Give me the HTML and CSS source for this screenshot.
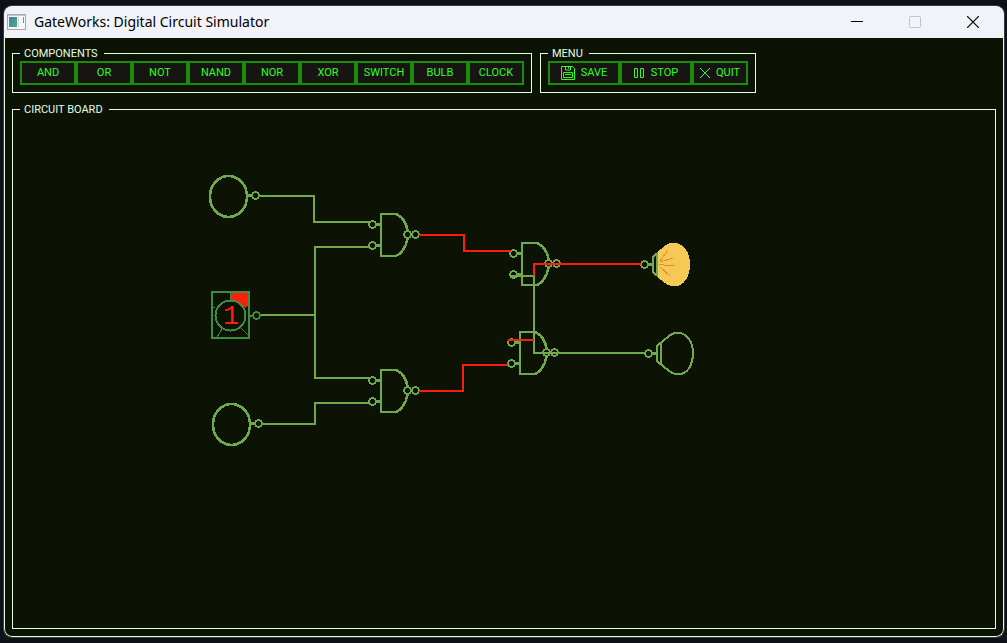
FILE: index.html
```html
<!DOCTYPE html>
<html lang="en">
<head>
<meta charset="utf-8">
<title>GateWorks: Digital Circuit Simulator</title>
<link rel="stylesheet" href="styles.css">
</head>
<body>
<div class="window">
  <header class="titlebar">
    <svg class="app-icon" width="19" height="16" viewBox="0 0 19 16" aria-hidden="true">
      <defs><linearGradient id="screen" x1="0" y1="0" x2="1" y2="1"><stop offset="0" stop-color="#4a78b0"/><stop offset="1" stop-color="#48b078"/></linearGradient></defs>
      <rect x=".5" y=".5" width="18" height="15" fill="#f6f7f8" stroke="#a4a8ac"/>
      <path d="M1 1.5h17" stroke="#c4c8cc"/>
      <rect x="2" y="3" width="8" height="10" fill="url(#screen)"/>
      <path d="M11.5 3v10" stroke="#d4d8dc"/>
      <path d="M16.5 3v6" stroke="#48a890" stroke-width="1"/>
    </svg>
    <h1 class="title">GateWorks: Digital Circuit Simulator</h1>
    <div class="controls">
      <button class="control" aria-label="Minimize"><svg width="12" height="12"><path d="M0 5.5h12" stroke="#000"/></svg></button>
      <button class="control" aria-label="Maximize" disabled><svg width="12" height="12"><rect x=".5" y=".5" width="11" height="11" rx="1" fill="none" stroke="#c2c3c8"/></svg></button>
      <button class="control" aria-label="Close"><svg width="12" height="12"><path d="M0 0l12 12M12 0L0 12" stroke="#000" stroke-width="1.2"/></svg></button>
    </div>
  </header>
  <main class="client">
    <div class="toolbar">
      <fieldset class="panel">
        <legend>COMPONENTS</legend>
        <div class="buttons">
          <button class="tool">AND</button>
          <button class="tool">OR</button>
          <button class="tool">NOT</button>
          <button class="tool">NAND</button>
          <button class="tool">NOR</button>
          <button class="tool">XOR</button>
          <button class="tool">SWITCH</button>
          <button class="tool">BULB</button>
          <button class="tool">CLOCK</button>
        </div>
      </fieldset>
      <fieldset class="panel">
        <legend>MENU</legend>
        <div class="buttons">
          <button class="tool tool-wide"><svg width="14" height="14" class="glyph" aria-hidden="true"><path d="M.5.5h11l2 2v11H.5zM4.500 1v3h5V1M7.500 1v1.500M2.500 11.500v-5h9v5zM4 8.500h6"/></svg>SAVE</button>
          <button class="tool tool-wide"><svg width="11" height="10" class="glyph" aria-hidden="true"><path d="M.5.5h3v9h-3zM6.500.5h3v9h-3z"/></svg>STOP</button>
          <button class="tool"><svg width="10" height="10" class="glyph" aria-hidden="true"><path d="M0 0l10 10M10 0L0 10"/></svg>QUIT</button>
        </div>
      </fieldset>
    </div>
    <fieldset class="panel board">
      <legend>CIRCUIT BOARD</legend>
      <svg class="canvas" aria-label="Circuit">
        <defs>
          <g id="pin"><circle r="3.500" stroke-width="1.700"/></g>
          <g id="nand">
            <path d="M14 0H0v42h14"/>
            <path d="M14 0C20 1 26 9 26.500 17M26.500 25C25 33 20 41 14 42" stroke-width="2.500"/>
            <path d="M-5 10.500h5M-5 31.500h5" stroke-width="3"/>
            <use href="#pin" x="-8.500" y="10.500"/><use href="#pin" x="-8.500" y="31.500"/>
            <use href="#pin" x="26.500" y="20.500"/><use href="#pin" x="34.500" y="20.500"/>
          </g>
          <g id="switch">
            <ellipse rx="18.500" ry="20.500" stroke-width="2.600"/>
            <path d="M19-1h5" stroke-width="3"/>
            <use href="#pin" x="27" y="-1"/>
          </g>
          <path id="glass" d="M12.500-11L22-18.500C25-21 28-21 32-20.500C41-18 44.500-9 44.500 0S41 18 33 20.500C29 21 26 21 22 18.500L12.500 11z"/>
          <g id="socket">
            <path d="M4 0h5" stroke-width="3"/>
            <path d="M8.500-8L12.500-11V11L8.500 8z"/>
            <use href="#pin"/>
          </g>
        </defs>
        <g class="circuit" transform="translate(-13 -115)">
          <g class="part">
            <use href="#switch" x="228.500" y="196.500"/>
            <use href="#switch" x="231.500" y="424.500"/>
            <use href="#nand" x="381" y="214"/>
            <use href="#nand" x="381" y="370"/>
            <use href="#nand" x="522" y="243"/>
            <use href="#nand" x="520" y="332"/>
            <use href="#glass" x="644.500" y="264.500" class="lit"/>
            <use href="#socket" x="644.500" y="264.500"/>
            <use href="#glass" x="648.500" y="353.500"/>
            <use href="#socket" x="648.500" y="353.500"/>
          </g>
          <path class="ray" d="M660 261l8-11M660 262l13-4M659 264.500l16 1.500M660 267l10 9"/>
          <g class="clock">
            <path class="sweep" d="M231 293h17v13l-3 2-4-5q-5-3-10-3z"/>
            <path d="M212 292h37v46h-37zM250 315.500h3"/>
            <circle cx="230.500" cy="315.500" r="15"/>
            <use href="#pin" x="256.500" y="315.500"/>
            <path d="M230.500 293v7M213 307l2 1M222 329l-5 8M240 327l8 8" stroke-width="1"/>
            <text x="231" y="324">1</text>
          </g>
          <g class="wire">
            <path d="M259 196h55v26h55M261 315h54M369 247h-54v131h54M262 424h53v-21h54M511 276h23v77h111"/>
          </g>
          <g class="wire live">
            <path d="M419 235h45v16h47M419 391h44v-26h45M508 340h26M534 276v-12h107"/>
          </g>
        </g>
      </svg>
    </fieldset>
  </main>
</div>
</body>
</html>
```
FILE: styles.css
```css
* { box-sizing: border-box; }

body {
  margin: 0;
  height: 100vh;
  padding: 6px 3px 6px 4px;
  background: #0e1117;
  font-family: Roboto, "Liberation Sans", sans-serif;
}

button { margin: 0; padding: 0; font: inherit; }

.window {
  height: 100%;
  display: flex;
  flex-direction: column;
  border-radius: 8px;
  overflow: hidden;
  box-shadow: 0 0 0 1px #3a3b40;
}

.titlebar {
  flex: none;
  height: 32px;
  display: flex;
  align-items: center;
  padding: 0 2px 0 3px;
  background: #f1f3f9;
}

.title {
  flex: 1;
  margin: 0 0 0 8px;
  font: 14px/20px "Noto Sans", "Open Sans", sans-serif;
  color: #000;
}

.controls { display: flex; align-self: stretch; }

.control {
  width: 58px;
  display: flex;
  align-items: center;
  justify-content: center;
  border: 0;
  background: transparent;
}

.client {
  flex: 1;
  min-height: 0;
  display: flex;
  flex-direction: column;
  gap: 11px;
  padding: 10px 7px 7px;
  background: #0c1305;
  border: 1px solid #e2ffe0;
  border-top: 0;
  border-radius: 0 0 8px 8px;
}

.toolbar { display: flex; gap: 8px; }

.panel {
  min-width: 0;
  margin: 0;
  padding: 2px 7px 7px;
  border: 1px solid #e2ffe0;
}

.panel legend {
  padding: 0 6px 0 4px;
  font-size: 11px;
  line-height: 11px;
  color: #e2ffe0;
}

.buttons { display: flex; }

.tool {
  width: 56px;
  height: 24px;
  display: flex;
  align-items: center;
  justify-content: center;
  gap: 6px;
  border: 2px solid #1c8c08;
  background: #171514;
  font-size: 11px;
  line-height: 14px;
  color: #2dff22;
}

.tool-wide { width: 72px; }

.glyph { fill: none; stroke: #2dff22; }

.board {
  flex: 1;
  min-height: 0;
  padding: 0;
}

.board legend { margin-left: 7px; }

.canvas { display: block; width: 100%; height: 100%; }

.circuit { fill: none; stroke-width: 2; shape-rendering: crispEdges; }
.part, .wire { stroke: #70a84c; }
.wire.live { stroke: #ff1e0c; }
.lit { fill: #f6c957; stroke: #f6c957; }
.ray { stroke: #e48b35; stroke-width: 1; }
.clock { stroke: #3f8b40; }
.sweep { fill: #ff1e0c; stroke: none; }
.clock text {
  fill: #ff1e0c;
  stroke: none;
  font: 27px "Liberation Mono", monospace;
  text-anchor: middle;
}
```
